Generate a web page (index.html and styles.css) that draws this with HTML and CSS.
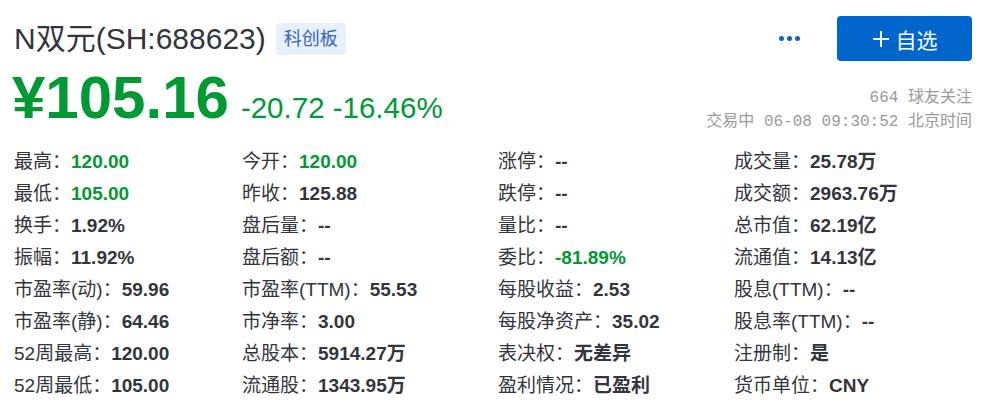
FILE: index.html
```html
<!DOCTYPE html>
<html lang="zh-CN">
<head>
<meta charset="utf-8">
<title>N双元</title>
<link rel="stylesheet" href="styles.css">
</head>
<body>
<div class="quote">
  <div class="head">
    <div class="title-wrap">
      <h1 class="title">N双元(SH:688623)</h1>
      <span class="badge">科创板</span>
    </div>
    <div class="actions">
      <span class="more"><i></i><i></i><i></i></span>
      <button class="follow"><svg class="plus" viewBox="0 0 18 18" width="18" height="18"><path d="M9 1v16M1 9h16" stroke="#fff" stroke-width="2" fill="none"/></svg><span>自选</span></button>
    </div>
  </div>
  <div class="price-row">
    <div class="price-wrap">
      <span class="price">¥105.16</span>
      <span class="change">-20.72 -16.46%</span>
    </div>
    <div class="meta">
      <div>664 球友关注</div>
      <div>交易中 06-08 09:30:52 北京时间</div>
    </div>
  </div>
  <div class="grid">
    <div class="cell">最高：<b class="green">120.00</b></div>
    <div class="cell">今开：<b class="green">120.00</b></div>
    <div class="cell">涨停：<b>--</b></div>
    <div class="cell">成交量：<b>25.78万</b></div>

    <div class="cell">最低：<b class="green">105.00</b></div>
    <div class="cell">昨收：<b>125.88</b></div>
    <div class="cell">跌停：<b>--</b></div>
    <div class="cell">成交额：<b>2963.76万</b></div>

    <div class="cell">换手：<b>1.92%</b></div>
    <div class="cell">盘后量：<b>--</b></div>
    <div class="cell">量比：<b>--</b></div>
    <div class="cell">总市值：<b>62.19亿</b></div>

    <div class="cell">振幅：<b>11.92%</b></div>
    <div class="cell">盘后额：<b>--</b></div>
    <div class="cell">委比：<b class="green">-81.89%</b></div>
    <div class="cell">流通值：<b>14.13亿</b></div>

    <div class="cell">市盈率(动)：<b>59.96</b></div>
    <div class="cell">市盈率(TTM)：<b>55.53</b></div>
    <div class="cell">每股收益：<b>2.53</b></div>
    <div class="cell">股息(TTM)：<b>--</b></div>

    <div class="cell">市盈率(静)：<b>64.46</b></div>
    <div class="cell">市净率：<b>3.00</b></div>
    <div class="cell">每股净资产：<b>35.02</b></div>
    <div class="cell">股息率(TTM)：<b>--</b></div>

    <div class="cell">52周最高：<b>120.00</b></div>
    <div class="cell">总股本：<b>5914.27万</b></div>
    <div class="cell">表决权：<b>无差异</b></div>
    <div class="cell">注册制：<b>是</b></div>

    <div class="cell">52周最低：<b>105.00</b></div>
    <div class="cell">流通股：<b>1343.95万</b></div>
    <div class="cell">盈利情况：<b>已盈利</b></div>
    <div class="cell">货币单位：<b>CNY</b></div>
  </div>
</div>
</body>
</html>
```
FILE: styles.css
```css
* { box-sizing: border-box; }
html, body { margin: 0; padding: 0; background: #fff; }
body {
  font-family: "Liberation Sans", "Noto Sans CJK SC", sans-serif;
  color: #33353c;
}
.quote { padding: 16px 14px 0 14px; width: 986px; }
.head {
  display: flex;
  justify-content: space-between;
  align-items: center;
  height: 45px;
}
.title-wrap { display: flex; align-items: center; }
.title {
  margin: 0;
  font-size: 30px;
  font-weight: normal;
  color: #33353c;
  line-height: 45px;
}
.badge {
  margin-left: 10px;
  background: #e6f1fb;
  color: #3b62c6;
  font-size: 18px;
  border-radius: 4px;
  height: 32px;
  line-height: 32px;
  padding: 0 8px;
}
.actions { display: flex; align-items: center; }
.more { display: flex; gap: 3px; margin-right: 37px; }
.more i { width: 5px; height: 5px; border-radius: 50%; background: #0a66cc; display: block; }
.follow {
  width: 135px;
  height: 45px;
  border: 0;
  border-radius: 4px;
  background: #0066cc;
  color: #fff;
  display: flex;
  align-items: center;
  justify-content: center;
  gap: 6px;
  font-family: "Noto Sans CJK SC", sans-serif;
  font-size: 21px;
  padding: 0;
}
.price-row {
  display: flex;
  justify-content: space-between;
  align-items: flex-end;
  margin-top: 2px;
  height: 75px;
}
.price-wrap { display: flex; align-items: baseline; padding-bottom: 5px; }
.price {
  font-size: 60px;
  font-weight: bold;
  color: #009933;
  line-height: 70px;
  margin-left: -2px;
}
.change {
  margin-left: 12px;
  font-size: 29.5px;
  color: #009933;
}
.meta {
  text-align: right;
  font-family: "Liberation Mono", "Noto Sans CJK SC", monospace;
  font-size: 16px;
  color: #9a9a9a;
  line-height: 24px;
  padding-bottom: 4px;
}
.grid {
  display: grid;
  grid-template-columns: 228px 256px 236px 1fr;
  margin-top: 8px;
}
.cell {
  font-size: 19px;
  line-height: 32px;
  height: 32px;
  white-space: nowrap;
  color: #33353c;
}
.cell b { font-weight: bold; color: #33353c; }
.cell b.green { color: #009933; }
```
